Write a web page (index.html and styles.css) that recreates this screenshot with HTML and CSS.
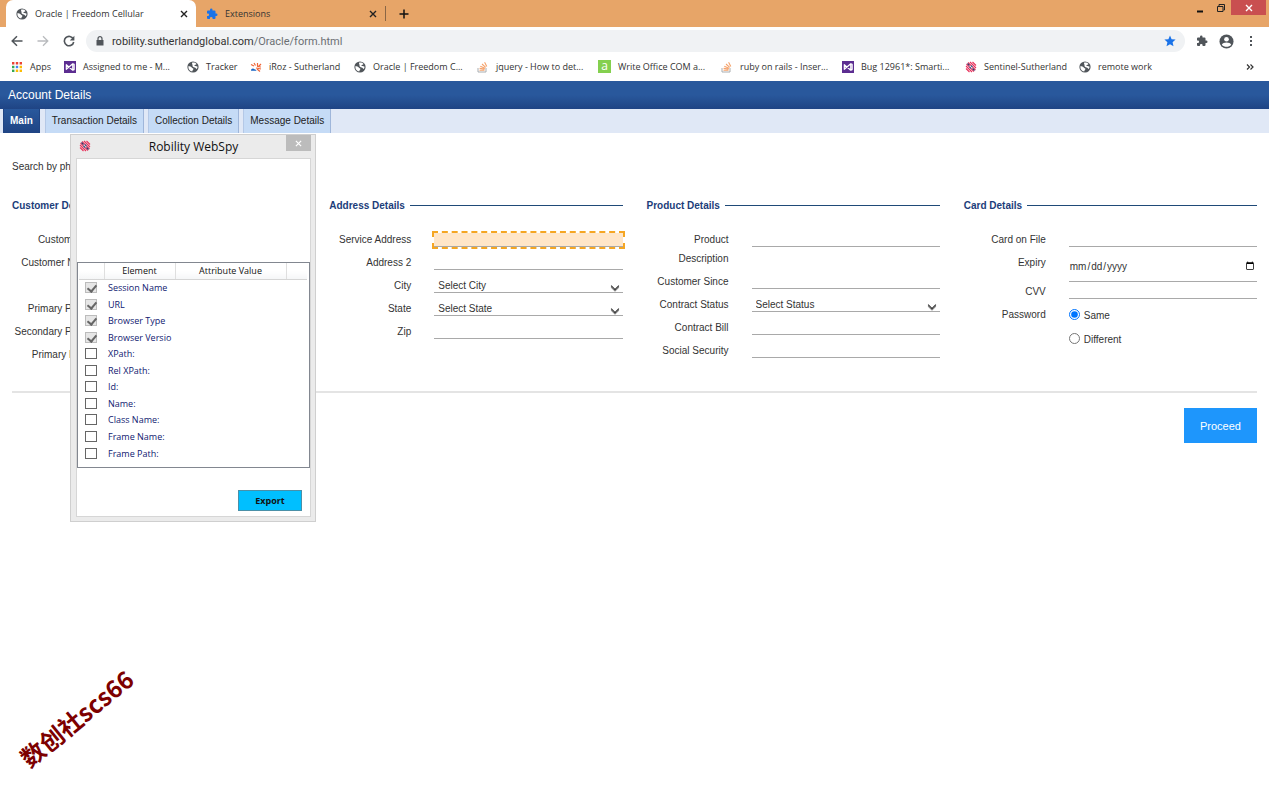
FILE: index.html
```html
<!DOCTYPE html>
<html lang="en">
<head>
<meta charset="utf-8">
<title>Oracle | Freedom Cellular</title>
<link rel="stylesheet" href="styles.css">
</head>
<body>

<svg class="sprite" width="0" height="0" aria-hidden="true">
  <symbol id="globe" viewBox="0 0 12 12">
    <circle cx="6" cy="6" r="5.600" fill="#50555a"/>
    <path d="M1.300 5.200c1.500.1 3 .3 3.500 1.300.4.8 1.600.5 1.600 1.400 0 1-1 1-1.200 2.600C3 10.300 1.200 8.500 1.300 5.200zM5.200 1.600c.9-.5 3.300-.2 4.300 1.300-.4 1-1.600.6-2 1.200-.3.5.3 1 .9 1 .9 0 1.400.3 2.200.7-.1 1-.4 1.700-.9 2.300C8.900 7.500 8.900 6.800 7.600 6.500 6.400 6.300 5.300 5.500 5.500 4.200 5.600 3.200 4.600 2.700 5.200 1.600z" fill="#fff"/>
  </symbol>
  <symbol id="puzzle" viewBox="0 0 24 24">
    <path d="M20.500 11H19V7a2 2 0 0 0-2-2h-4V3.500a2.500 2.500 0 0 0-5 0V5H4a2 2 0 0 0-2 2v3.800h1.500a2.700 2.700 0 0 1 0 5.400H2V20a2 2 0 0 0 2 2h3.800v-1.500a2.700 2.700 0 0 1 5.400 0V22H17a2 2 0 0 0 2-2v-4h1.500a2.500 2.500 0 0 0 0-5z"/>
  </symbol>
  <symbol id="vs" viewBox="0 0 13 13">
    <rect width="13" height="13" fill="#5c2d91"/>
    <path d="M2.500 4v5L9.500 3v7zM9.500 3l1.500.7v5.600l-1.500.7z" fill="none" stroke="#fff" stroke-width="1.300" stroke-linejoin="round"/>
  </symbol>
  <symbol id="stack" viewBox="0 0 12 12">
    <path d="M1 7v4h8V7" fill="none" stroke="#a9adb0"/>
    <path d="M2.500 9.300h5M2.600 7.400l5 .7M3.300 5.300l4.600 1.900M5 3l3.700 3.300M7.600 1.300l2.200 4.300" stroke="#f5a26b" stroke-width="1.100"/>
  </symbol>
  <symbol id="stripes" viewBox="0 0 12 12">
    <path d="M7.500 1l3.500 3.500M1 7.500L4.500 11M5 1l6 6M1 5l6 6" stroke="#e8325c" stroke-width="1.100"/>
    <path d="M3 1.500l3 3M7.500 6l3 3M1.500 3l3 3M6 7.500l3 3" stroke="#e8325c" stroke-width="1.100"/>
    <path d="M6 4.500L7.500 6M4.500 6L6 7.500M2.500 2.500l2 2M7.500 7.500l2 2" stroke="#2d3e70" stroke-width="1.100"/>
  </symbol>
  <symbol id="close" viewBox="0 0 8 8">
    <path d="M1 1l6 6M7 1L1 7" stroke="currentColor" stroke-width="1.400"/>
  </symbol>
</svg>

<div class="screen">

  <header class="browser">
    <div class="tab-strip">
      <div class="browser-tab active">
        <svg class="icon"><use href="#globe"/></svg>
        <span>Oracle | Freedom Cellular</span>
        <button class="tab-close" aria-label="Close tab"><svg><use href="#close"/></svg></button>
      </div>
      <div class="browser-tab">
        <svg class="icon blue"><use href="#puzzle"/></svg>
        <span>Extensions</span>
        <button class="tab-close" aria-label="Close tab"><svg><use href="#close"/></svg></button>
      </div>
      <button class="new-tab" aria-label="New tab"><svg viewBox="0 0 10 10"><path d="M5 .5v9M.5 5h9" stroke="#111" stroke-width="1.500"/></svg></button>
      <div class="window-buttons">
        <button aria-label="Minimize"><svg viewBox="0 0 10 10"><path d="M2 8.500h6" stroke="#111" stroke-width="2"/></svg></button>
        <button aria-label="Restore"><svg viewBox="0 0 10 10"><path d="M1.500 3.500h5.500v5h-5.500zM3 3V1.500h5.500v5.500H7.500" fill="none" stroke="#222"/></svg></button>
        <button class="window-close" aria-label="Close"><svg><use href="#close"/></svg></button>
      </div>
    </div>

    <div class="toolbar">
      <div class="history">
        <button aria-label="Back"><svg viewBox="0 0 12 12"><path d="M11.500 6H1.500M6 1.200L1.200 6 6 10.800" fill="none" stroke="#50555a" stroke-width="1.500"/></svg></button>
        <button aria-label="Forward"><svg viewBox="0 0 12 12"><path d="M.5 6h10M6 1.200L10.800 6 6 10.800" fill="none" stroke="#b9bbbe" stroke-width="1.300"/></svg></button>
        <button aria-label="Reload"><svg viewBox="0 0 12 12"><path d="M10.300 4A4.700 4.700 0 1 0 10.700 7" fill="none" stroke="#50555a" stroke-width="1.600"/><path d="M11.400 .8v4.600H6.800z" fill="#50555a"/></svg></button>
      </div>
      <div class="address">
        <svg class="lock" viewBox="0 0 8 10"><path d="M.5 4h7v5.500h-7z" fill="#50555a"/><path d="M2 4V2.700a2 2 0 0 1 4 0V4" fill="none" stroke="#50555a" stroke-width="1.200"/></svg>
        <span>robility.sutherlandglobal.com<em>/Oracle/form.html</em></span>
        <svg class="star" viewBox="0 0 12 12"><path d="M6 .5l1.600 3.700 4 .4-3 2.700.9 4L6 9.200l-3.500 2.100.9-4-3-2.700 4-.4z" fill="#1a73e8"/></svg>
      </div>
      <button aria-label="Extensions"><svg class="grey"><use href="#puzzle"/></svg></button>
      <button class="profile" aria-label="Profile"><svg viewBox="0 0 16 16"><circle cx="8" cy="8" r="7.500" fill="#50555a"/><circle cx="8" cy="5.600" r="2.500" fill="#fff"/><path d="M3 11.400c1.200-3 8.800-3 10 0-2.400 3-7.600 3-10 0z" fill="#fff"/></svg></button>
      <button aria-label="Menu"><svg viewBox="0 0 12 12"><path d="M5 1h2v2H5zM5 5h2v2H5zM5 9h2v2H5z" fill="#50555a"/></svg></button>
    </div>

    <nav class="bookmarks">
      <a href="#"><svg class="icon" viewBox="0 0 12 12"><path d="M1 1h2.400v2.400H1zM4.800 1h2.400v2.400H4.800zM8.600 1H11v2.400H8.600z" fill="#ea4335"/><path d="M1 4.800h2.400v2.400H1z" fill="#34a853"/><path d="M4.800 4.800h2.400v2.400H4.800z" fill="#4285f4"/><path d="M8.600 4.800H11v2.400H8.600zM8.600 8.600H11V11H8.600zM4.800 8.600h2.400V11H4.800z" fill="#fbbc05"/><path d="M1 8.600h2.400V11H1z" fill="#34a853"/></svg>Apps</a>
      <a href="#"><svg class="icon"><use href="#vs"/></svg>Assigned to me - M...</a>
      <a href="#"><svg class="icon"><use href="#globe"/></svg>Tracker</a>
      <a href="#"><svg class="icon" viewBox="0 0 12 12"><path d="M1 3.500l3 1.500M4 2l1.500 2.500M7.500 2v3M11 3L8.500 5.500M6 7l5 1M7 5.500l4 .5M7 8l3 2.500" stroke="#ef6537" stroke-width="1.200"/><path d="M1 9.800c0-2 2-3 3.500-1.500 1 .1 1.800.6 2 1.500z" fill="#1b66c4"/></svg>iRoz - Sutherland</a>
      <a href="#"><svg class="icon"><use href="#globe"/></svg>Oracle | Freedom C...</a>
      <a href="#"><svg class="icon"><use href="#stack"/></svg>jquery - How to det...</a>
      <a href="#"><span class="letter-icon">a</span>Write Office COM a...</a>
      <a href="#"><svg class="icon"><use href="#stack"/></svg>ruby on rails - Inser...</a>
      <a href="#"><svg class="icon"><use href="#vs"/></svg>Bug 12961*: Smarti...</a>
      <a href="#"><svg class="icon"><use href="#stripes"/></svg>Sentinel-Sutherland</a>
      <a href="#"><svg class="icon"><use href="#globe"/></svg>remote work</a>
      <button class="more" aria-label="More bookmarks"><svg viewBox="0 0 10 10"><path d="M2 2.500L4.500 5 2 7.500M5.500 2.500L8 5 5.500 7.500" fill="none" stroke="#333" stroke-width="1.200"/></svg></button>
    </nav>
  </header>

  <h1>Account Details</h1>
  <nav class="page-tabs">
    <a class="active" href="#">Main</a>
    <a href="#">Transaction Details</a>
    <a href="#">Collection Details</a>
    <a href="#">Message Details</a>
  </nav>

  <main>
    <form>
      <div class="search">
        <label for="search">Search by phone</label>
        <input type="text" id="search">
      </div>

      <div class="columns">
        <section>
          <h2>Customer Details</h2>
          <div class="row"><label for="custId">Customer ID</label><input type="text" id="custId"></div>
          <div class="row"><label for="custName">Customer Name</label><input type="text" id="custName"></div>
          <div class="row"><input type="text" class="second" aria-label="Last name"></div>
          <div class="row"><label for="phone1">Primary Phone</label><input type="text" id="phone1"></div>
          <div class="row"><label for="phone2">Secondary Phone</label><input type="text" id="phone2"></div>
          <div class="row"><label for="email">Primary Email</label><input type="text" id="email"></div>
        </section>

        <section>
          <h2>Address Details</h2>
          <div class="row"><label for="address1">Service Address</label><input type="text" id="address1" class="highlight"></div>
          <div class="row"><label for="address2">Address 2</label><input type="text" id="address2"></div>
          <div class="row"><label for="city">City</label><div class="select"><select id="city"><option>Select City</option></select></div></div>
          <div class="row"><label for="state">State</label><div class="select"><select id="state"><option>Select State</option></select></div></div>
          <div class="row"><label for="zip">Zip</label><input type="text" id="zip"></div>
        </section>

        <section>
          <h2>Product Details</h2>
          <div class="row"><label for="product">Product</label><input type="text" id="product"></div>
          <div class="row text-row"><span>Description</span></div>
          <div class="row"><label for="since">Customer Since</label><input type="text" id="since"></div>
          <div class="row"><label for="status">Contract Status</label><div class="select"><select id="status"><option>Select Status</option></select></div></div>
          <div class="row"><label for="bill">Contract Bill</label><input type="text" id="bill"></div>
          <div class="row"><label for="ssn">Social Security</label><input type="text" id="ssn"></div>
        </section>

        <section>
          <h2>Card Details</h2>
          <div class="row"><label for="card">Card on File</label><input type="text" id="card"></div>
          <div class="row date-row"><label for="expiry">Expiry</label><input type="date" id="expiry"></div>
          <div class="row"><label for="cvv">CVV</label><input type="text" id="cvv"></div>
          <div class="row">
            <span class="label">Password</span>
            <div class="radios">
              <label><input type="radio" name="password" checked> Same</label>
              <label><input type="radio" name="password"> Different</label>
            </div>
          </div>
        </section>
      </div>

      <div class="actions">
        <button type="button" class="proceed">Proceed</button>
      </div>
    </form>

    <div class="webspy">
      <div class="title-bar">
        <svg class="icon"><use href="#stripes"/></svg>
        <span>Robility WebSpy</span>
        <button aria-label="Close WebSpy"><svg><use href="#close"/></svg></button>
      </div>
      <div class="webspy-body">
        <div class="preview"></div>
        <div class="list">
          <table>
            <thead>
              <tr><th class="check"></th><th class="element">Element</th><th class="value">Attribute Value</th><th></th></tr>
            </thead>
            <tbody>
              <tr><td><input type="checkbox" id="w1" checked disabled></td><td colspan="3"><label for="w1">Session Name</label></td></tr>
              <tr><td><input type="checkbox" id="w2" checked disabled></td><td colspan="3"><label for="w2">URL</label></td></tr>
              <tr><td><input type="checkbox" id="w3" checked disabled></td><td colspan="3"><label for="w3">Browser Type</label></td></tr>
              <tr><td><input type="checkbox" id="w4" checked disabled></td><td colspan="3"><label for="w4">Browser Versio</label></td></tr>
              <tr><td><input type="checkbox" id="w5"></td><td colspan="3"><label for="w5">XPath:</label></td></tr>
              <tr><td><input type="checkbox" id="w6"></td><td colspan="3"><label for="w6">Rel XPath:</label></td></tr>
              <tr><td><input type="checkbox" id="w7"></td><td colspan="3"><label for="w7">Id:</label></td></tr>
              <tr><td><input type="checkbox" id="w8"></td><td colspan="3"><label for="w8">Name:</label></td></tr>
              <tr><td><input type="checkbox" id="w9"></td><td colspan="3"><label for="w9">Class Name:</label></td></tr>
              <tr><td><input type="checkbox" id="w10"></td><td colspan="3"><label for="w10">Frame Name:</label></td></tr>
              <tr><td><input type="checkbox" id="w11"></td><td colspan="3"><label for="w11">Frame Path:</label></td></tr>
            </tbody>
          </table>
        </div>
        <button class="export">Export</button>
      </div>
    </div>
  </main>
</div>

<div class="watermark">数创社scs66</div>

</body>
</html>
```
FILE: styles.css
```css
* {
  box-sizing: border-box;
}

body {
  margin: 0;
  min-height: 100vh;
  position: relative;
  background: #fff;
  color: #333;
  font-family: "Liberation Sans", Arial, sans-serif;
  font-size: 10px;
}

button,
input,
select {
  font-family: inherit;
  font-size: inherit;
  color: inherit;
}

button {
  border: none;
  padding: 0;
  background: none;
  display: flex;
  align-items: center;
  justify-content: center;
}

a {
  color: inherit;
  text-decoration: none;
}

svg {
  flex: none;
}

.sprite {
  position: absolute;
}

.screen {
  margin-right: 11px;
}

.icon {
  width: 12px;
  height: 12px;
}

.blue {
  fill: #1a73e8;
}

.grey {
  fill: #50555a;
}

/* browser */
.browser {
  font-family: "Open Sans", "Noto Sans", sans-serif;
  font-size: 9px;
}

.tab-strip {
  display: flex;
  height: 27px;
  padding-left: 6px;
  background: #e7a568;
}

.browser-tab {
  display: flex;
  align-items: center;
  gap: 7px;
  width: 189px;
  padding: 0 8px 0 10px;
}

.browser-tab.active {
  width: 190px;
  background: #fff;
  border-radius: 7px 7px 0 0;
}

.tab-close {
  margin-left: auto;
}

.tab-close svg {
  width: 8px;
  height: 8px;
  color: #222;
}

.new-tab {
  margin: 6px 0;
  padding-left: 13px;
  border-left: 1px solid #8a6645;
}

.new-tab svg {
  width: 10px;
  height: 10px;
}

.window-buttons {
  display: flex;
  height: 15px;
  margin-left: auto;
  margin-right: 3px;
}

.window-buttons button {
  width: 21px;
}

.window-buttons svg {
  width: 10px;
  height: 10px;
}

.window-buttons .window-close {
  width: 35px;
  background: #c94f50;
  color: #fff;
}

.window-buttons .window-close svg {
  width: 8px;
  height: 8px;
}

.toolbar {
  display: flex;
  align-items: center;
  gap: 11px;
  height: 28px;
  padding: 0 12px 0 11px;
}

.history {
  display: flex;
  gap: 14px;
}

.toolbar button svg {
  width: 12px;
  height: 12px;
}

.toolbar .profile svg {
  width: 15px;
  height: 15px;
}

.address {
  display: flex;
  align-items: center;
  flex: 1;
  gap: 8px;
  height: 22px;
  padding: 0 9px 0 10px;
  border-radius: 11px;
  background: #f0f2f4;
  font-family: Roboto, sans-serif;
  font-size: 11px;
}

.address em {
  font-style: normal;
  color: #6b6f73;
}

.lock {
  width: 8px;
  height: 10px;
}

.star {
  width: 12px;
  height: 12px;
  margin-left: auto;
}

.bookmarks {
  display: grid;
  grid-template-columns: 53px 123px 63px 104px 123px 121px 123px 121px 123px 114px 1fr auto;
  align-items: center;
  height: 26px;
  padding: 0 14px 3px 11px;
}

.bookmarks a {
  display: flex;
  align-items: center;
  gap: 7px;
  white-space: nowrap;
}

.letter-icon {
  width: 13px;
  height: 13px;
  background: #84d04f;
  color: #fff;
  font-size: 12px;
  line-height: 11px;
  text-align: center;
}

.more svg {
  width: 10px;
  height: 10px;
}

/* page header */
h1 {
  height: 28px;
  margin: 0;
  padding-left: 8px;
  background: linear-gradient(#29589c 50%, #1f4484);
  color: #fff;
  font-size: 12px;
  font-weight: normal;
  line-height: 28px;
}

.page-tabs {
  display: flex;
  gap: 4px;
  height: 24px;
  padding-left: 3px;
  background: #e0e8f6;
  color: #222;
}

.page-tabs a {
  padding: 0 6px;
  border-right: 1px solid #9fb6da;
  border-left: 1px solid #b4c8e6;
  background: #c5dbf6;
  line-height: 24px;
}

.page-tabs a.active {
  margin-right: 1px;
  border-color: #1f4484;
  background: linear-gradient(#29589c, #1f4484);
  color: #fff;
  font-weight: bold;
}

/* form */
main {
  position: relative;
}

form {
  padding: 24px 12px 0;
}

.search {
  display: grid;
  grid-template-columns: 82px 160px;
  column-gap: 23px;
  height: 19px;
  line-height: 19px;
  white-space: nowrap;
}

.columns {
  display: grid;
  grid-template-columns: repeat(4, 1fr);
  gap: 24px;
  min-height: 217px;
  padding-top: 22px;
  border-bottom: 2px solid #e4e4e4;
}

h2 {
  display: flex;
  align-items: center;
  gap: 5px;
  height: 14px;
  margin: 0 0 16px;
  color: #1c3d7a;
  font-size: 10px;
}

h2::after {
  content: "";
  flex: 1;
  border-top: 1px solid #1f4a78;
}

.row {
  display: grid;
  grid-template-columns: 82px 1fr;
  column-gap: 23px;
  height: 19px;
  margin-bottom: 4px;
}

.row > label,
.row > .label {
  margin-top: 4px;
  line-height: 15px;
  text-align: right;
  white-space: nowrap;
}

.text-row {
  height: 15px;
  line-height: 15px;
  text-align: right;
}

.date-row {
  height: 25px;
}

.second {
  grid-column: 2;
}

input[type="text"],
input[type="date"],
select {
  width: 100%;
  height: 19px;
  padding: 0;
  border: none;
  border-bottom: 1px solid #a9a9a9;
  border-radius: 0;
  background: none;
}

input[type="date"] {
  height: 31px;
}

input[type="text"].highlight {
  height: 14px;
  margin-top: 5px;
  background: #ffe6c9;
  outline: 2px dashed #f5a623;
}

.select {
  position: relative;
}

.select::after {
  content: "";
  position: absolute;
  top: 9px;
  right: 5px;
  width: 5px;
  height: 5px;
  border: solid #222;
  border-width: 0 1px 1px 0;
  box-shadow: 1px 1px 0 -0px #888;
  transform: rotate(45deg);
  pointer-events: none;
}

select {
  appearance: none;
  padding: 5px 4px 0;
}

.radios label {
  display: flex;
  align-items: center;
  gap: 4px;
  height: 24px;
}

.radios input {
  width: 11px;
  height: 11px;
  margin: 0 0 2px;
}

.actions {
  display: flex;
  justify-content: flex-end;
  padding-top: 15px;
}

.proceed {
  width: 73px;
  height: 35px;
  background: #1e96fc;
  color: #fff;
  font-size: 11px;
}

/* floating window */
.webspy {
  position: absolute;
  top: 1px;
  left: 70px;
  width: 246px;
  padding: 0 4px 4px 5px;
  border: 1px solid #cfcfcf;
  background: #ebebeb;
  color: #111;
  font-family: "Open Sans", "Noto Sans", sans-serif;
  font-size: 9px;
}

.title-bar {
  display: grid;
  grid-template-columns: 25px 1fr 25px;
  height: 23px;
}

.title-bar .icon {
  margin: 5px 0 0 3px;
}

.title-bar span {
  font-size: 12px;
  line-height: 24px;
  text-align: center;
}

.title-bar button {
  height: 16px;
  background: #bcbcbc;
  color: #fff;
}

.title-bar button svg {
  width: 7px;
  height: 7px;
}

.webspy-body {
  height: 359px;
  border: 1px solid #d6d6d6;
  background: #fff;
}

.preview {
  height: 103px;
}

.list {
  height: 206px;
  padding: 0 2px 0 1px;
  border: 1px solid #828790;
}

table {
  width: 100%;
  height: 199px;
  border-collapse: collapse;
  table-layout: fixed;
}

th {
  height: 16px;
  padding: 0;
  border-right: 1px solid #dfdfdf;
  border-bottom: 1px solid #d5d5d5;
  background: linear-gradient(#fff 50%, #f5f6f7);
  font-weight: normal;
  line-height: 14px;
}

th:last-child {
  border-right: none;
}

.check {
  width: 25px;
}

.element {
  width: 71px;
}

.value {
  width: 111px;
}

td {
  padding: 0 0 0 4px;
  color: #0f2070;
  line-height: 12px;
}

td:first-child {
  padding: 0 0 1px 6px;
}

td input {
  display: block;
  appearance: none;
  width: 12px;
  height: 11px;
  margin: 0;
  border: 1px solid #666;
  background: #fff;
}

td input:checked {
  border-color: #bcbcbc;
  background: #e6e6e6;
}

td input:checked::before {
  content: "";
  display: block;
  width: 4px;
  height: 7px;
  margin-left: 3px;
  border: solid #666;
  border-width: 0 2px 2px 0;
  transform: rotate(40deg);
}

.export {
  width: 64px;
  height: 21px;
  margin: 22px 8px 0 auto;
  border: 1px solid #4a90a8;
  background: #00bfff;
  color: #111;
  font-size: 9px;
  font-weight: bold;
}

.watermark {
  position: absolute;
  top: 702px;
  left: 8px;
  color: #7d0000;
  font-family: "Noto Sans CJK SC", sans-serif;
  font-size: 24px;
  font-weight: bold;
  line-height: 32px;
  white-space: nowrap;
  transform: rotate(-39deg);
}
```
